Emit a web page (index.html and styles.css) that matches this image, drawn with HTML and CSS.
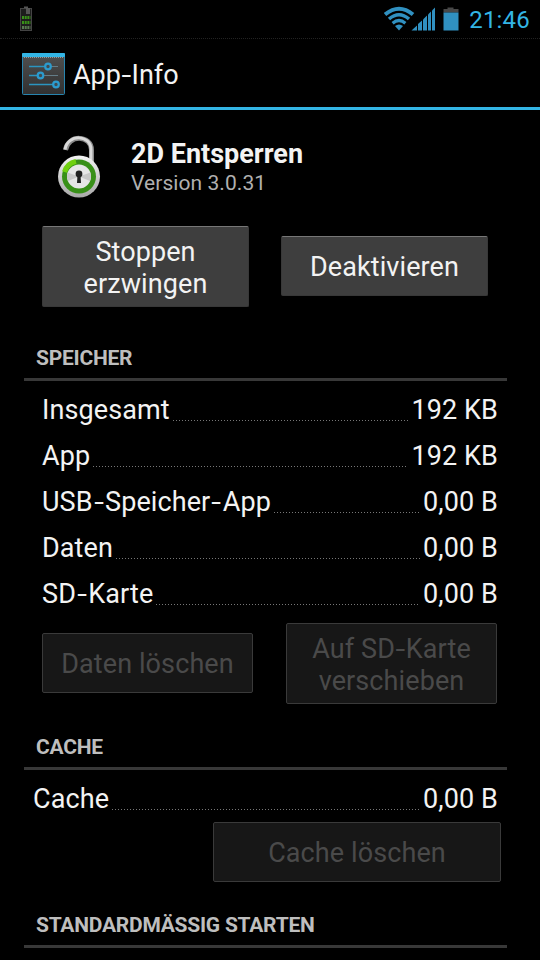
FILE: index.html
```html
<!DOCTYPE html>
<html lang="de">
<head>
  <meta charset="UTF-8">
  <meta name="viewport" content="width=device-width, initial-scale=1.0">
  <title>App-Info</title>
  <link rel="stylesheet" href="styles.css">
</head>
<body>

  <!-- Status bar -->
  <div class="status-bar">
    <svg class="battery-small" width="12" height="25" viewBox="0 0 12 25">
      <rect x="4" y="0.5" width="4" height="2" fill="#555"/>
      <rect x="0.5" y="2.5" width="11" height="22" fill="#1d1d1d" stroke="#444"/>
      <rect x="6" y="2" width="4" height="6" fill="#555"/>
      <g stroke-width="3" stroke-dasharray="2 0.7">
        <path d="M2 11.5H10.5" stroke="#389018"/>
        <path d="M2 16.5H10.5" stroke="#389018"/>
        <path d="M2 21.5H10.5" stroke="#587850"/>
      </g>
    </svg>
    <div class="status-icons">
      <svg width="80" height="26" viewBox="0 0 80 26">
        <!-- wifi -->
        <g fill="none" stroke="#3090c0" stroke-width="4">
          <path d="M1 8.5Q15 -3 29 8.5"/>
          <path d="M5 13Q15 4.5 25 13" stroke-width="3.6"/>
          <path d="M8.6 17.2Q15 11.8 21.4 17.2" stroke-width="3.2"/>
        </g>
        <path d="M11 20Q15 16.8 19 20L15 24.5Z" fill="#3090c0"/>
        <!-- signal -->
        <g fill="#3090c0">
          <path d="M27.5 24.5L33 19.5V24.5Z"/>
          <path d="M34 24.5V18L38 14.5V24.5Z"/>
          <path d="M39 24.5V13.5L43 9.5V24.5Z"/>
          <path d="M44 24.5V8.5L47 5.5V24.5Z"/>
          <path d="M48 24.5V4.5L51 1.5V24.5Z"/>
        </g>
        <!-- battery -->
        <path d="M63.5 1.5H69.5V3H74.5V6.5H59.5V3H63.5Z" fill="#484848"/>
        <rect x="59.5" y="6.5" width="15" height="18" fill="#3090c0"/>
      </svg>
      <span class="clock">21:46</span>
    </div>
  </div>

  <!-- Action bar -->
  <div class="action-bar">
    <svg width="44" height="43" viewBox="0 0 44 43">
      <defs>
        <linearGradient id="panel" x1="0" y1="0" x2="0" y2="1">
          <stop offset="0" stop-color="#505050"/>
          <stop offset="1" stop-color="#303030"/>
        </linearGradient>
      </defs>
      <rect x="0.5" y="0.5" width="42" height="41" rx="1" fill="url(#panel)" stroke="#2784ae"/>
      <rect x="0" y="0" width="43" height="4" rx="1" fill="#33b5e5"/>
      <path d="M2 4.5H41" stroke="#999" stroke-dasharray="1 1"/>
      <path d="M26 13.5H36M7 22.5H18M22 22.5H36" stroke="#647d88"/>
      <path d="M7 13.5H26M7 22.5H17M7 31.5H34" stroke="#2b95c0" stroke-width="1.3"/>
      <g fill="#404b50" stroke="#2b9bce" stroke-width="2.2">
        <circle cx="26" cy="13.5" r="2.8"/>
        <circle cx="18.5" cy="22.5" r="2.8"/>
        <circle cx="34" cy="31.5" r="2.8"/>
      </g>
    </svg>
    <h1>App<span class="dash">-</span>Info</h1>
  </div>

  <!-- App header -->
  <div class="app-header">
    <svg width="44" height="64" viewBox="0 0 44 64">
      <defs>
        <linearGradient id="metal" x1="0" y1="0" x2="0" y2="1">
          <stop offset="0" stop-color="#f4f4f4"/>
          <stop offset="1" stop-color="#a8a8a8"/>
        </linearGradient>
      </defs>
      <path d="M7.5 15C10 -1 33.5 0 33.5 15V28" fill="none" stroke="#8a8a8a" stroke-width="5"/>
      <path d="M7 14.5C9.5 -1.5 33 -.5 33 14.5V28" fill="none" stroke="#d8d8d8" stroke-width="3"/>
      <circle cx="21" cy="41.5" r="21" fill="url(#metal)"/>
      <circle cx="21" cy="41.5" r="17" fill="#389018"/>
      <path d="M6.5 37A15 15 0 0 1 18 26.5" fill="none" stroke="#70d010" stroke-width="5"/>
      <circle cx="21" cy="41.5" r="12" fill="#e6e6e6"/>
      <path d="M21 41.5L9.5 37.5A12 12 0 0 0 10 46ZM21 41.5L32.5 37.5A12 12 0 0 1 32 46Z" fill="#c8c8c8"/>
      <circle cx="21" cy="39" r="3.4" fill="#202020"/>
      <path d="M19.5 40H22.5L23 48H19Z" fill="#202020"/>
    </svg>
    <div>
      <div class="app-name">2D Entsperren</div>
      <div class="app-version">Version 3.0.31</div>
    </div>
  </div>

  <div class="button-row main-actions">
    <button class="btn tall">Stoppen<br>erzwingen</button>
    <button class="btn">Deaktivieren</button>
  </div>

  <!-- Storage -->
  <h2 class="section-title">Speicher</h2>
  <div class="info-list">
    <div class="info-row"><span>Insgesamt</span><i class="dots"></i><span>192 KB</span></div>
    <div class="info-row"><span>App</span><i class="dots"></i><span>192 KB</span></div>
    <div class="info-row"><span>USB<span class="dash">-</span>Speicher<span class="dash">-</span>App</span><i class="dots"></i><span>0,00 B</span></div>
    <div class="info-row"><span>Daten</span><i class="dots"></i><span>0,00 B</span></div>
    <div class="info-row"><span>SD<span class="dash">-</span>Karte</span><i class="dots"></i><span>0,00 B</span></div>
  </div>
  <div class="button-row storage-actions">
    <button class="btn" disabled>Daten löschen</button>
    <button class="btn tall" disabled>Auf SD<span class="dash">-</span>Karte<br>verschieben</button>
  </div>

  <!-- Cache -->
  <h2 class="section-title cache-title">Cache</h2>
  <div class="info-list cache-list">
    <div class="info-row"><span>Cache</span><i class="dots"></i><span>0,00 B</span></div>
  </div>
  <div class="cache-actions">
    <button class="btn" disabled>Cache löschen</button>
  </div>

  <h2 class="section-title">Standardmässig starten</h2>

</body>
</html>
```
FILE: styles.css
```css
* {
  box-sizing: border-box;
}

body {
  margin: 0;
  height: 960px;
  overflow: hidden;
  background-color: #000;
  color: #f3f3f3;
  font-family: Roboto, sans-serif;
  font-size: 27px;
}

svg {
  display: block;
  flex-shrink: 0;
}

/* wider hyphen */
.dash {
  display: inline-block;
  padding: 0 1.6px;
  transform: scaleX(1.3);
}

.status-bar {
  display: flex;
  justify-content: space-between;
  height: 39px;
  padding: 6px 10px 0 20px;
  border-bottom: 1px dotted #222;
}

.status-icons {
  display: flex;
  gap: 5px;
}

.clock {
  color: #33b5e5;
  font-size: 24px;
  line-height: 28px;
  letter-spacing: 0.2px;
}

.action-bar {
  display: flex;
  gap: 7px;
  height: 71px;
  padding: 14px 22px 0;
  border-bottom: 3px solid #33b5e5;
}

h1 {
  margin: 0;
  font-size: 27px;
  font-weight: 400;
  line-height: 44px;
}

.app-header {
  display: flex;
  gap: 29px;
  height: 116px;
  padding: 25px 58px 0;
}

.app-name {
  margin-top: 3px;
  font-size: 27px;
  font-weight: 700;
  line-height: 32px;
}

.app-version {
  color: #b0b0b0;
  font-size: 21px;
  line-height: 26px;
  letter-spacing: 0.07px;
}

.button-row {
  display: flex;
  align-items: center;
  padding-left: 42px;
}

.btn {
  width: 207px;
  height: 60px;
  padding: 1px 0 0;
  border: 1px solid #383838;
  border-top-color: #777;
  border-radius: 2px;
  background-color: #3e3e3e;
  color: #f3f3f3;
  font-family: inherit;
  font-size: 27px;
  line-height: 32px;
  letter-spacing: 0.1px;
  margin-bottom: 1px;
}

.btn.tall {
  height: 81px;
  padding-top: 2px;
  margin-bottom: 0;
}

.btn:disabled {
  border-color: #3a3a3a;
  background-color: #171717;
  color: #4a4a4a;
}

.main-actions {
  gap: 32px;
  height: 81px;
}

.section-title {
  height: 48px;
  margin: 26px 33px 0 24px;
  padding-left: 12px;
  border-bottom: 3px solid #383838;
  color: #bebebe;
  font-size: 21px;
  font-weight: 700;
  letter-spacing: -0.25px;
  line-height: 51px;
  text-transform: uppercase;
}

.info-list {
  padding: 6px 42px 0;
}

.info-row {
  display: flex;
  height: 46px;
  line-height: 46px;
  letter-spacing: 0.1px;
}

.info-row .dash {
  padding: 0 2.4px;
}

.dots {
  flex: 1;
  height: 34px;
  margin: 0 3px;
  background: repeating-linear-gradient(to right, #777 0 1px, transparent 1px 3px) left bottom / 100% 1px no-repeat;
}

.storage-actions {
  gap: 33px;
  height: 93px;
}

.storage-actions .btn {
  width: 211px;
}

.cache-title {
  margin-top: 12px;
}

.cache-list {
  padding-left: 33px;
}

.cache-actions {
  display: flex;
  justify-content: flex-end;
  padding: 0 39px 0 0;
  height: 52px;
}

.cache-actions .btn {
  width: 288px;
  flex-shrink: 0;
  padding-top: 2px;
}
```
